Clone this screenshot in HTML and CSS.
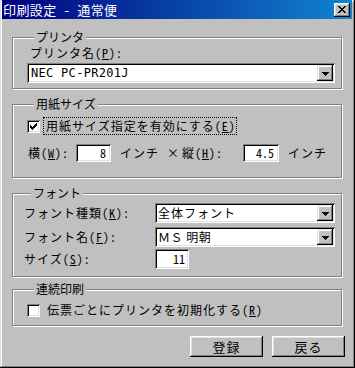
FILE: index.html
```html
<!DOCTYPE html>
<html lang="ja">
<head>
<meta charset="utf-8">
<title>印刷設定 - 通常便</title>
<link rel="stylesheet" href="styles.css">
</head>
<body>
<div class="window">
  <div class="titlebar">
    <span class="title">印刷設定 - 通常便</span>
    <span class="close"><svg width="8" height="7" viewBox="0 0 8 7"><path d="M0 0h2v1h1v1h2v-1h1v-1h2v1h-1v1h-1v1h-1v1h1v1h1v1h1v1h-2v-1h-1v-1h-2v1h-1v1h-2v-1h1v-1h1v-1h1v-1h-1v-1h-1v-1h-1z" fill="#000"/></svg></span>
  </div>
  <div class="content">
    <div class="group g1">
      <div class="legend">プリンタ</div>
      <div class="label printer-label">プリンタ名(<u>P</u>):</div>
      <div class="combo printer-combo">
        <span class="combo-text mono">NEC PC-PR201J</span>
        <span class="drop"><svg width="7" height="4" viewBox="0 0 7 4"><path d="M0 0h7v1h-1v1h-1v1h-1v1h-1v-1h-1v-1h-1v-1h-1z" fill="#000"/></svg></span>
      </div>
    </div>

    <div class="group g2">
      <div class="legend">用紙サイズ</div>
      <div class="check-row">
        <span class="checkbox"><svg width="7" height="7" viewBox="0 0 7 7"><path d="M6 0h1v3h-1v1h-1v1h-1v1h-1v1h-1v-1h-1v-1h-1v-3h1v1h1v1h1v-1h1v-1h1v-1h1z" fill="#000"/></svg></span>
        <span class="focus">用紙サイズ指定を有効にする(<u>E</u>)</span>
      </div>
      <div class="size-row">
        <span class="size-lbl lbl-w">横(<u>W</u>):</span>
        <span class="field size-field">8</span>
        <span class="unit unit-1">インチ</span>
        <span class="times">×</span>
        <span class="size-lbl lbl-h">縦(<u>H</u>):</span>
        <span class="field size-field wide-field">4.5</span>
        <span class="unit unit-2">インチ</span>
      </div>
    </div>

    <div class="group g3">
      <div class="legend">フォント</div>
      <div class="form-row row-1">
        <span class="flabel">フォント種類(<u>K</u>):</span>
        <div class="combo font-combo">
          <span class="combo-text">全体フォント</span>
          <span class="drop"><svg width="7" height="4" viewBox="0 0 7 4"><path d="M0 0h7v1h-1v1h-1v1h-1v1h-1v-1h-1v-1h-1v-1h-1z" fill="#000"/></svg></span>
        </div>
      </div>
      <div class="form-row row-2">
        <span class="flabel">フォント名(<u>F</u>):</span>
        <div class="combo font-combo">
          <span class="combo-text fullwidth">ＭＳ 明朝</span>
          <span class="drop"><svg width="7" height="4" viewBox="0 0 7 4"><path d="M0 0h7v1h-1v1h-1v1h-1v1h-1v-1h-1v-1h-1v-1h-1z" fill="#000"/></svg></span>
        </div>
      </div>
      <div class="form-row row-3">
        <span class="flabel">サイズ(<u>S</u>):</span>
        <span class="field font-size-field">11</span>
      </div>
    </div>

    <div class="group g4">
      <div class="legend">連続印刷</div>
      <div class="plain-check-row">
        <span class="checkbox"></span>
        <span class="plain-label">伝票ごとにプリンタを初期化する(<u>R</u>)</span>
      </div>
    </div>

    <div class="buttons">
      <span class="button">登録</span>
      <span class="button">戻る</span>
    </div>
  </div>
</div>
</body>
</html>
```

FILE: styles.css
```css
* { box-sizing: border-box; }

html, body {
  margin: 0;
  padding: 0;
  background: #c0c0c0;
}

body {
  font-family: "Noto Sans CJK JP", sans-serif;
  font-size: 12px;
  line-height: 14px;
  color: #000;
  font-feature-settings: "hwid" 1;
}

u { text-decoration: underline; text-underline-offset: 1px; }

.window {
  width: 355px;
  height: 368px;
  padding: 0 3px 3px 2px;
  background: #c0c0c0;
  box-shadow: inset -1px -1px #000, inset 1px 1px #dfdfdf, inset -2px -2px #808080, inset 2px 2px #fff;
  display: flex;
  flex-direction: column;
}

.titlebar {
  height: 19px;
  background: linear-gradient(to right, #000080, #1084d0);
  display: flex;
  align-items: center;
  justify-content: space-between;
  padding: 0 2px 0 1px;
}

.title {
  color: #fff;
  font-size: 13px;
  line-height: 15px;
  letter-spacing: 0.4px;
}

.close {
  width: 16px;
  height: 14px;
  background: #c0c0c0;
  box-shadow: inset -1px -1px #000, inset 1px 1px #fff, inset -2px -2px #808080, inset 2px 2px #dfdfdf;
  display: flex;
  align-items: center;
  justify-content: center;
  padding: 0 1px 1px 0;
}
.close svg { display: block; }

.content {
  padding: 0 10px;
  display: flex;
  flex-direction: column;
}

.group {
  border: 1px solid #808080;
  box-shadow: 1px 1px 0 #fff, inset 1px 1px 0 #fff;
  display: flex;
  flex-direction: column;
  align-items: flex-start;
}

.legend {
  margin: -8px 0 0 7px;
  padding: 0 2px;
  background: #c0c0c0;
  line-height: 14px;
  height: 14px;
}

.g1 { margin-top: 18px; padding: 0 6px 5px 14px; }
.g2 { margin-top: 15px; padding: 0 6px 15px 14px; }
.g3 { margin-top: 15px; padding: 0 6px 7px 11px; }
.g4 { margin-top: 12px; padding: 0 6px 8px 14px; }

.label, .focus, .size-lbl, .unit, .flabel, .plain-label, .combo-text, .button {
  letter-spacing: 1px;
}

.printer-label { margin: 2px 0 0 3px; }

.combo {
  height: 20px;
  background: #fff;
  box-shadow: inset 1px 1px #808080, inset -1px -1px #fff, inset 2px 2px #000, inset -2px -2px #dfdfdf;
  display: flex;
  align-items: center;
  justify-content: space-between;
  padding: 2px;
}
.printer-combo { width: 308px; margin-top: 3px; }
.font-combo { width: 180px; }

.combo-text { padding-left: 2px; white-space: pre; }
.font-combo .combo-text { padding-left: 1px; }
.fullwidth { font-feature-settings: normal; letter-spacing: 0.5px; }

.mono {
  font-family: "DejaVu Sans Mono", monospace;
  font-size: 12px;
  letter-spacing: 0.3px;
}

.drop {
  width: 16px;
  height: 16px;
  background: #c0c0c0;
  box-shadow: inset -1px -1px #000, inset 1px 1px #dfdfdf, inset -2px -2px #808080, inset 2px 2px #fff;
  display: flex;
  align-items: center;
  justify-content: center;
  padding-top: 1px;
}
.drop svg { display: block; }

.check-row {
  margin-top: 6px;
  display: flex;
  align-items: center;
  height: 18px;
}

.checkbox {
  width: 13px;
  height: 13px;
  background: #fff;
  box-shadow: inset 1px 1px #808080, inset -1px -1px #fff, inset 2px 2px #000, inset -2px -2px #dfdfdf;
  display: flex;
  align-items: center;
  justify-content: center;
  flex: none;
}
.checkbox svg { display: block; }

.focus {
  margin-left: 3px;
  border: 1px dotted #000;
  padding: 1px 0 1px 2px;
  line-height: 14px;
}

.size-row {
  margin-top: 9px;
  display: flex;
  align-items: center;
  height: 18px;
}

.size-lbl { flex: none; }
.lbl-w { width: 48px; margin-left: 1px; }
.lbl-h { width: 61px; }

.field {
  height: 18px;
  background: #fff;
  box-shadow: inset 1px 1px #808080, inset -1px -1px #fff, inset 2px 2px #000, inset -2px -2px #dfdfdf;
  text-align: right;
  padding: 2px 5px 0 2px;
  line-height: 14px;
  flex: none;
}
.size-field { width: 35px; }
.wide-field { width: 36px; }

.unit-1 { margin-left: 9px; width: 47px; }
.unit-2 { margin-left: 9px; }
.times { width: 15px; }

.form-row {
  display: flex;
  align-items: center;
  height: 20px;
}
.row-1 { margin-top: 3px; }
.row-2 { margin-top: 4px; }
.row-3 { margin-top: 2px; }

.flabel { width: 131px; }

.font-size-field { width: 34px; height: 20px; padding-top: 3px; padding-right: 4px; }

.plain-check-row {
  margin-top: 7px;
  display: flex;
  align-items: center;
  height: 14px;
}
.plain-label { margin-left: 7px; }

.buttons {
  margin: 10px -3px 0 0;
  display: flex;
  justify-content: flex-end;
  gap: 9px;
}

.button {
  width: 73px;
  height: 21px;
  background: #c0c0c0;
  box-shadow: inset -1px -1px #000, inset 1px 1px #fff, inset -2px -2px #808080, inset 2px 2px #dfdfdf;
  display: flex;
  align-items: center;
  justify-content: center;
  font-size: 13px;
}
```
